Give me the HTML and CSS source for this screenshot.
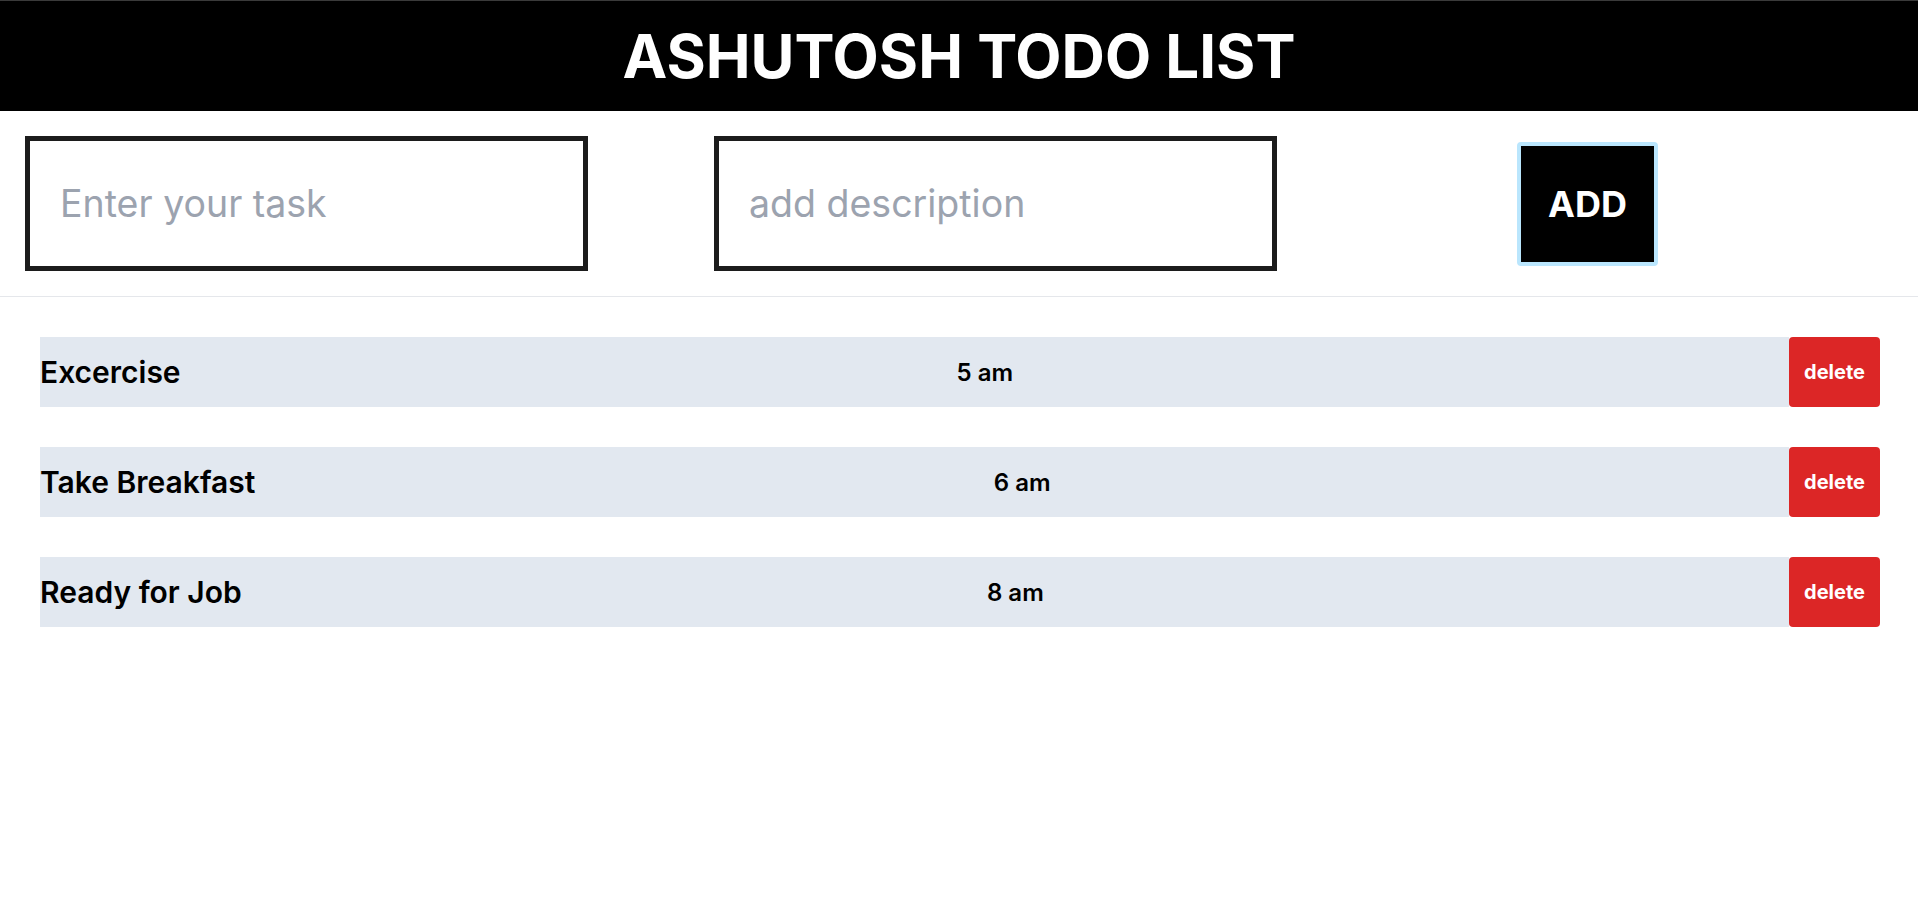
FILE: index.html
```html
<!DOCTYPE html>
<html lang="en">
<head>
<meta charset="utf-8">
<title>Ashutosh Todo List</title>
<link rel="stylesheet" href="styles.css">
</head>
<body>
  <header class="header">
    <h1 class="title">ASHUTOSH TODO LIST</h1>
  </header>
  <form class="form">
    <input class="field field-task" type="text" placeholder="Enter your task">
    <input class="field field-desc" type="text" placeholder="add description">
    <button class="add-btn" type="button">ADD</button>
  </form>
  <ul class="list">
    <li class="row">
      <div class="row-main">
        <span class="row-title">Excercise</span>
        <span class="row-time">5 am</span>
      </div>
      <button class="del-btn" type="button">delete</button>
    </li>
    <li class="row">
      <div class="row-main">
        <span class="row-title">Take Breakfast</span>
        <span class="row-time">6 am</span>
      </div>
      <button class="del-btn" type="button">delete</button>
    </li>
    <li class="row">
      <div class="row-main">
        <span class="row-title">Ready for Job</span>
        <span class="row-time">8 am</span>
      </div>
      <button class="del-btn" type="button">delete</button>
    </li>
  </ul>
</body>
</html>
```

FILE: styles.css
```css
* {
  box-sizing: border-box;
}

html, body {
  margin: 0;
  padding: 0;
  background: #ffffff;
  font-family: Inter, "Noto Sans", "Liberation Sans", sans-serif;
  color: #000000;
}

.header {
  height: 111px;
  background: #000000;
  border-top: 1px solid #3a3a3a;
  display: flex;
  align-items: center;
  justify-content: center;
}

.title {
  margin: 0;
  color: #ffffff;
  font-size: 60px;
  line-height: 60px;
  font-weight: 700;
}

.form {
  display: flex;
  align-items: center;
  padding: 25px 0 25px 25px;
  border-bottom: 1px solid #e5e7eb;
}

.field {
  width: 563px;
  height: 135px;
  border: 5px solid #1c1c1c;
  padding: 0 30px;
  font-family: inherit;
  font-size: 37.5px;
  color: #000;
  outline: none;
  background: #fff;
}

.field::placeholder {
  color: #9ca3af;
}

.field-desc {
  margin-left: 126px;
}

.add-btn {
  margin-left: 240px;
  width: 141px;
  height: 124px;
  background: #000000;
  border: 4px solid #bae6fd;
  border-radius: 4px;
  color: #ffffff;
  font-family: inherit;
  font-size: 36px;
  font-weight: 700;
  padding: 0;
}

.list {
  list-style: none;
  margin: 0;
  padding: 0;
}

.row {
  display: flex;
  height: 70px;
  margin: 40px 38px 0 40px;
}

.row-main {
  flex: 1;
  display: flex;
  align-items: center;
  justify-content: space-between;
  background: #e2e8f0;
}

.row-main::after {
  content: "";
  width: 0;
}

.row-title {
  font-size: 30px;
  font-weight: 600;
}

.row-time {
  font-size: 24px;
  font-weight: 600;
}

.del-btn {
  width: 91px;
  height: 70px;
  background: #dc2626;
  color: #ffffff;
  border: none;
  border-radius: 4px;
  font-family: inherit;
  font-size: 20px;
  font-weight: 700;
  padding: 0;
}
```
